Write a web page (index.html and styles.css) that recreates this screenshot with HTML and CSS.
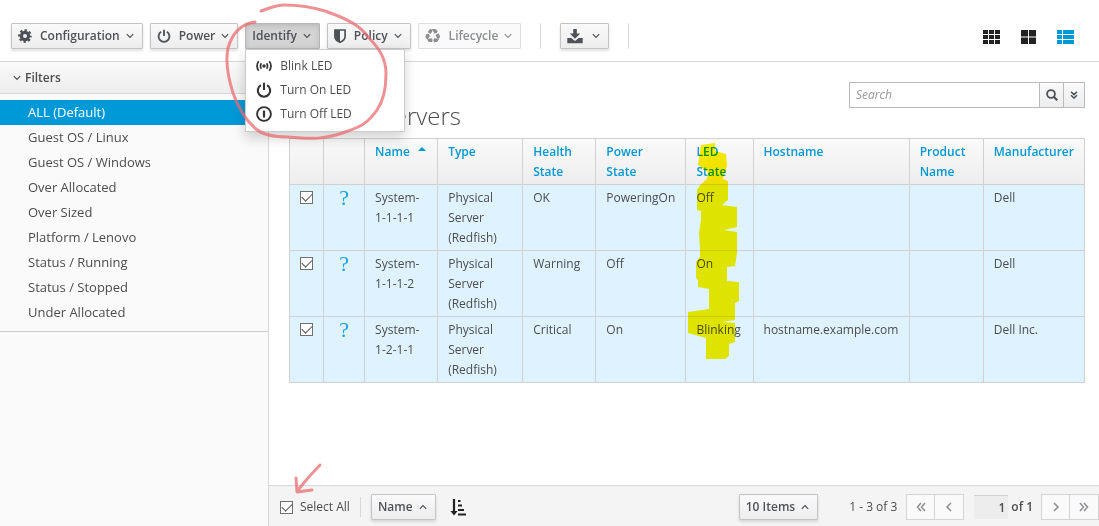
FILE: index.html
```html
<!DOCTYPE html>
<html lang="en">
<head>
<meta charset="utf-8">
<title>Physical Servers</title>
<link rel="stylesheet" href="styles.css">
</head>
<body>
<svg class="defs" aria-hidden="true">
  <symbol id="down" viewBox="0 0 8 8"><path d="M.8 2.200 4 5.400 7.200 2.200" fill="none" stroke="currentColor" stroke-width="1.200"/></symbol>
  <symbol id="up" viewBox="0 0 8 8"><path d="M.8 5.800 4 2.600 7.200 5.800" fill="none" stroke="currentColor" stroke-width="1.200"/></symbol>
  <symbol id="power" viewBox="0 0 16 16"><path d="M4.800 3.200A6.200 6.200 0 1 0 11.200 3.200M8 .8V8" fill="none" stroke="currentColor" stroke-width="2.100"/></symbol>
</svg>
<header class="toolbar">
  <button class="btn"><svg class="icon" viewBox="0 0 16 16"><g fill="none" stroke="currentColor"><circle cx="8" cy="8" r="4.100" stroke-width="3.600"/><circle cx="8" cy="8" r="6.600" stroke-width="2.400" stroke-dasharray="2.8 2.384" stroke-dashoffset="1.400"/></g></svg>Configuration<svg class="chev"><use href="#down"/></svg></button>
  <button class="btn"><svg class="icon"><use href="#power"/></svg>Power<svg class="chev"><use href="#down"/></svg></button>
  <div class="dropdown">
    <button class="btn btn-open" aria-expanded="true">Identify<svg class="chev"><use href="#down"/></svg></button>
    <ul class="menu">
      <li><a href="#"><svg viewBox="0 0 16 16"><circle cx="8" cy="8" r="1.700" fill="currentColor"/><path d="M5.400 5.200Q3.500 8 5.400 10.800M10.600 5.200Q12.500 8 10.600 10.800M2.700 3.300Q-.700 8 2.700 12.700M13.300 3.300Q16.700 8 13.300 12.700" fill="none" stroke="currentColor" stroke-width="1.700"/></svg>Blink LED</a></li>
      <li><a href="#"><svg><use href="#power"/></svg>Turn On LED</a></li>
      <li><a href="#"><svg viewBox="0 0 16 16"><circle cx="8" cy="8" r="6.900" fill="none" stroke="currentColor" stroke-width="1.900"/><path d="M8 4.500v7" stroke="currentColor" stroke-width="2.200"/></svg>Turn Off LED</a></li>
    </ul>
  </div>
  <button class="btn"><svg class="icon icon-shield" viewBox="0 0 13 15"><path d="M1 1h11v7c0 3-2.500 5-5.500 6.300C3.500 13 1 11 1 8z" fill="none" stroke="currentColor" stroke-width="1.800"/><path d="M1 1h5.500v13.300C3.500 13 1 11 1 8z" fill="currentColor"/></svg>Policy<svg class="chev"><use href="#down"/></svg></button>
  <button class="btn" disabled><span class="recycle" aria-hidden="true">&#9851;&#65038;</span>Lifecycle<svg class="chev"><use href="#down"/></svg></button>
  <span class="rule"></span>
  <button class="btn" aria-label="Download"><svg class="icon icon-download" viewBox="0 0 16 15"><path d="M6.200 0h3.600v4.500h3.400L8 9.700 2.800 4.500h3.400zM.3 9h4l3.700 3L11.700 9h4v5.300H.3z" fill="currentColor"/></svg><svg class="chev"><use href="#down"/></svg></button>
  <span class="rule"></span>
  <nav class="views" aria-label="View">
    <a href="#" aria-label="Grid view"><svg viewBox="0 0 17 14"><path d="M0 0h5v4H0zM6 0h5v4H6zM12 0h5v4h-5zM0 5h5v4H0zM6 5h5v4H6zM12 5h5v4h-5zM0 10h5v4H0zM6 10h5v4H6zM12 10h5v4h-5z" fill="currentColor"/></svg></a>
    <a href="#" aria-label="Tile view"><svg viewBox="0 0 17 14"><path d="M1 0h7v6.500H1zM9 0h7v6.500H9zM1 7.500h7V14H1zM9 7.500h7V14H9z" fill="currentColor"/></svg></a>
    <a class="current" href="#" aria-label="List view"><svg viewBox="0 0 17 14"><path d="M0 0h5v4H0zM6 0h11v4H6zM0 5h5v4H0zM6 5h11v4H6zM0 10h5v4H0zM6 10h11v4H6z" fill="currentColor"/></svg></a>
  </nav>
</header>
<div class="layout">
  <aside class="sidebar">
    <h2><svg class="chev"><use href="#down"/></svg>Filters</h2>
    <ul>
      <li><a class="active" href="#">ALL (Default)</a></li>
      <li><a href="#">Guest OS / Linux</a></li>
      <li><a href="#">Guest OS / Windows</a></li>
      <li><a href="#">Over Allocated</a></li>
      <li><a href="#">Over Sized</a></li>
      <li><a href="#">Platform / Lenovo</a></li>
      <li><a href="#">Status / Running</a></li>
      <li><a href="#">Status / Stopped</a></li>
      <li><a href="#">Under Allocated</a></li>
    </ul>
  </aside>
  <main>
    <section class="content">
      <div class="title-row">
        <h1>Physical Servers</h1>
        <form class="search">
          <input type="text" placeholder="Search" aria-label="Search">
          <button type="button" class="search-go" aria-label="Run search"><svg viewBox="0 0 12 12"><circle cx="5" cy="5" r="3.900" fill="none" stroke="currentColor" stroke-width="1.800"/><path d="M7.800 7.800 11.300 11.300" stroke="currentColor" stroke-width="2.200"/></svg></button>
          <button type="button" class="search-more" aria-label="Advanced search"><svg viewBox="0 0 8 8"><path d="M1 .8 4 3.600 7 .8M1 4.200 4 7 7 4.200" fill="none" stroke="currentColor" stroke-width="1.500"/></svg></button>
        </form>
      </div>
      <div class="table-wrap">
        <table>
          <colgroup><col class="c-check"><col class="c-icon"><col class="c-name"><col class="c-type"><col class="c-health"><col class="c-power"><col class="c-led"><col class="c-host"><col class="c-product"><col class="c-maker"></colgroup>
          <thead>
            <tr><th></th><th></th><th>Name<span class="sort"></span></th><th>Type</th><th>Health State</th><th>Power State</th><th>LED State</th><th>Hostname</th><th>Product Name</th><th>Manufacturer</th></tr>
          </thead>
          <tbody>
            <tr><td class="mid"><input type="checkbox" checked aria-label="Select System-1-1-1-1"></td><td class="mid unknown">?</td><td>System-<br>1-1-1-1</td><td>Physical Server (Redfish)</td><td>OK</td><td>PoweringOn</td><td>Off</td><td></td><td></td><td>Dell</td></tr>
            <tr><td class="mid"><input type="checkbox" checked aria-label="Select System-1-1-1-2"></td><td class="mid unknown">?</td><td>System-<br>1-1-1-2</td><td>Physical Server (Redfish)</td><td>Warning</td><td>Off</td><td>On</td><td></td><td></td><td>Dell</td></tr>
            <tr><td class="mid"><input type="checkbox" checked aria-label="Select System-1-2-1-1"></td><td class="mid unknown">?</td><td>System-<br>1-2-1-1</td><td>Physical Server (Redfish)</td><td>Critical</td><td>On</td><td>Blinking</td><td>hostname.example.com</td><td></td><td>Dell Inc.</td></tr>
          </tbody>
        </table>
        <svg class="marker" viewBox="0 0 60 224" aria-hidden="true"><path d="M14 5 28 3V11L39 14 40 26 36 39 41 41V60L35 65 50 67V87L37 90 50 92V113L48 126 40 127V141L52 142V161L48 163V180L35 182 48 183V202L42 204V216L38 219H19V198L1 193V172L22 169V149L11 147V140L9 138V122L13 117V109L12 93 14 80V71L10 70V50L13 45 20 39 21 32 11 25Z" fill="#fff000"/></svg>
      </div>
    </section>
    <footer class="pager">
      <label class="select-all"><input type="checkbox" checked>Select All</label>
      <span class="rule"></span>
      <button class="btn">Name<svg class="chev"><use href="#up"/></svg></button>
      <a class="order" href="#" aria-label="Sort ascending"><svg viewBox="0 0 17 17"><path d="M4 0v13M8 2h2.500M8 6.500h4M8 11h6M8 15.500h8" stroke="currentColor" stroke-width="2.200" fill="none"/><path d="M.5 12h7L4 16.500z" fill="currentColor"/></svg></a>
      <button class="btn per-page">10 Items<svg class="chev"><use href="#up"/></svg></button>
      <span class="range">1 - 3 of 3</span>
      <div class="pages"><button aria-label="First page"><svg viewBox="0 0 10 10"><path d="M5 1 1.500 5 5 9M9 1 5.500 5 9 9"/></svg></button><button aria-label="Previous page"><svg viewBox="0 0 10 10"><path d="M7 1 3 5l4 4"/></svg></button></div>
      <label class="page-of"><input type="text" value="1" aria-label="Current page">of 1</label>
      <div class="pages"><button aria-label="Next page"><svg viewBox="0 0 10 10"><path d="M3 1l4 4-4 4"/></svg></button><button aria-label="Last page"><svg viewBox="0 0 10 10"><path d="M1 1l3.500 4L1 9M5 1l3.500 4L5 9"/></svg></button></div>
    </footer>
    <svg class="arrow" viewBox="0 0 32 34" aria-hidden="true"><path d="M27 3Q16 14 5 28M3 16l1 14 15-2" /></svg>
  </main>
</div>
<svg class="circle" viewBox="0 0 170 146" aria-hidden="true"><path d="M41 11C50 8 56 5 64 5C80 5 92 7 105 11C125 18 140 25 148 37C160 49 166 59 166 74C166 88 164 100 157 110C148 123 140 127 128 131C105 140 90 139 68 137C54 137 43 135 36 129C24 119 18 107 13 93C8 77 5 62 8 48C12 34 21 24 35 22"/></svg>
</body>
</html>
```
FILE: styles.css
```css
* { box-sizing: border-box; }
body {
  margin: 0;
  min-height: 100vh;
  display: flex;
  flex-direction: column;
  position: relative;
  overflow-x: hidden;
  background: #fff;
  color: #4d4d4d;
  font: 12px/20px "Open Sans", sans-serif;
}
button, input { font: inherit; color: inherit; }
button { cursor: pointer; }
a { color: inherit; text-decoration: none; }
ul { list-style: none; margin: 0; padding: 0; }
.defs { position: absolute; width: 0; height: 0; }

.toolbar {
  display: flex;
  align-items: center;
  gap: 7px;
  padding: 23px 25px 12px 11px;
  border-bottom: 1px solid #d8d8d8;
}
.btn {
  display: flex;
  align-items: center;
  height: 26px;
  padding: 0 8px 0 6px;
  border: 1px solid #c4c4c4;
  border-radius: 1px;
  background: linear-gradient(#fafafa, #ededed);
  box-shadow: 0 2px 3px rgba(0, 0, 0, .12);
  font-weight: 600;
  color: #4d5258;
  white-space: nowrap;
}
.btn:disabled { color: #8b8d8f; background: #fafafa; border-color: #ddd; box-shadow: none; }
.btn-open { background: #d4d4d4; border-color: #b5b5b5; box-shadow: inset 0 2px 5px rgba(0, 0, 0, .12); }
.icon { width: 14px; height: 14px; margin-right: 8px; }
.icon-shield { width: 12px; }
.icon-download { width: 16px; height: 15px; margin-right: 3px; }
.recycle { width: 16px; margin-right: 8px; font: 20px/20px "DejaVu Sans", sans-serif; display: flex; justify-content: center; }
.chev { width: 8px; height: 8px; margin-left: 6px; flex: none; }
.rule { width: 1px; height: 26px; background: #d8d8d8; }
.toolbar .rule { margin: 0 12px; }
.views { display: flex; gap: 20px; margin-left: auto; color: #222; padding-top: 2px; }
.views svg { display: block; width: 17px; height: 14px; }
.views .current { color: #0099d8; }

.dropdown { position: relative; }
.menu {
  position: absolute;
  z-index: 2;
  top: 100%;
  left: 0;
  width: 160px;
  padding: 4px 10px 5px;
  background: #fff;
  border: 1px solid #ccc;
  box-shadow: 0 6px 12px rgba(0, 0, 0, .18);
}
.menu a { display: flex; align-items: center; gap: 8px; height: 24px; }
.menu svg { width: 16px; height: 16px; color: #333; }

.layout { flex: 1; display: flex; }
.sidebar { flex: none; width: 269px; background: #fafafa; border-right: 1px solid #d8d8d8; }
.sidebar h2 {
  display: flex;
  align-items: center;
  gap: 4px;
  height: 32px;
  margin: 0;
  padding-left: 7px;
  border-bottom: 1px solid #d8d8d8;
  background: linear-gradient(#fafafa, #ededed);
  font-size: 12px;
  font-weight: 600;
}
.sidebar ul { padding: 6px 0; border-bottom: 1px solid #ccc; }
.sidebar a { display: block; padding-left: 28px; font-size: 13px; line-height: 25px; }
.sidebar .active { background: #0099d8; color: #fff; }

main { flex: 1; min-width: 0; display: flex; flex-direction: column; position: relative; }
.content { flex: 1; padding: 20px 14px 20px 20px; }
.title-row { display: flex; justify-content: space-between; height: 56px; }
h1 { align-self: flex-end; margin: 0 0 8px; font-size: 24px; line-height: 28px; font-weight: 300; }
.search { display: flex; height: 26px; border: 1px solid #bbb; }
.search input { width: 189px; border: 0; padding: 0 6px; background: #fff; }
.search input::placeholder { color: #999; font-style: italic; }
.search button { display: grid; place-items: center; padding: 0; border: 0; border-left: 1px solid #bbb; background: linear-gradient(#fafafa, #ededed); color: #4d5258; }
.search-go { width: 24px; }
.search-more { width: 21px; }
.search-go svg { width: 12px; height: 12px; }
.search-more svg { width: 8px; height: 8px; }

.table-wrap { position: relative; }
table { width: 100%; table-layout: fixed; border-collapse: collapse; }
th, td { border: 1px solid #d1d1d1; padding: 3px 10px 2px; text-align: left; vertical-align: top; }
thead { background: linear-gradient(#fafafa, #ededed); }
th { color: #0099d3; font-weight: 600; }
tbody { background: #def3ff; }
.mid { padding-left: 0; padding-right: 0; text-align: center; }
.unknown { color: #1ba3dd; font: 22px/20px "Liberation Serif", serif; }
.sort { display: inline-block; margin-left: 8px; border: 4px solid transparent; border-top: 0; border-bottom-color: #0099d3; vertical-align: 5px; }
.c-check { width: 34px; }
.c-icon { width: 41px; }
.c-name, .c-health { width: 73px; }
.c-type { width: 85px; }
.c-power { width: 90px; }
.c-led { width: 67px; }
.c-host { width: 156px; }
.c-product { width: 74px; }
.c-maker { width: 101px; }
.marker { position: absolute; left: 50%; top: 2px; width: 60px; height: 224px; mix-blend-mode: multiply; }

input[type="checkbox"] {
  appearance: none;
  width: 13px;
  height: 13px;
  margin: 0;
  border: 1px solid #707070;
  background: #fff;
  display: grid;
  place-items: center;
}
.mid input[type="checkbox"] { margin: 3px auto 0; }
input[type="checkbox"]:checked::before {
  content: "";
  width: 9px;
  height: 5px;
  margin-bottom: 3px;
  border: solid #555;
  border-width: 0 0 1px 1px;
  transform: rotate(-45deg);
}

.pager {
  display: flex;
  align-items: center;
  height: 41px;
  padding: 2px 0 0 11px;
  background: #f4f4f4;
  border-top: 1px solid #d8d8d8;
  white-space: nowrap;
}
.select-all { display: flex; align-items: center; gap: 7px; }
.pager .rule { height: 20px; margin: 0 10px; }
.order { margin-left: 14px; color: #222; }
.order svg { display: block; width: 17px; height: 17px; }
.per-page { margin-left: auto; }
.range { margin: 0 9px 0 31px; }
.pages { display: flex; }
.pages button { display: grid; place-items: center; width: 29px; height: 26px; padding: 0; border: 1px solid #d4d4d4; background: #fafafa; }
.pages button + button { border-left: 0; }
.pages svg { width: 10px; height: 10px; fill: none; stroke: #8b8d8f; stroke-width: 1.500; }
.page-of { display: flex; align-items: center; gap: 3px; margin: 0 8px 0 10px; font-weight: 600; }
.page-of input { width: 34px; height: 24px; padding: 0 3px; border: 0; border-top: 1px solid #d4d4d4; background: #ededed; text-align: right; }

.circle, .arrow { position: absolute; fill: none; stroke: #e96b70; stroke-opacity: .75; stroke-linecap: round; stroke-linejoin: round; pointer-events: none; }
.circle { z-index: 3; left: 220px; top: 0; width: 170px; height: 146px; stroke-width: 3; }
.arrow { left: 24px; bottom: 30px; width: 32px; height: 34px; stroke-width: 3; }
```
